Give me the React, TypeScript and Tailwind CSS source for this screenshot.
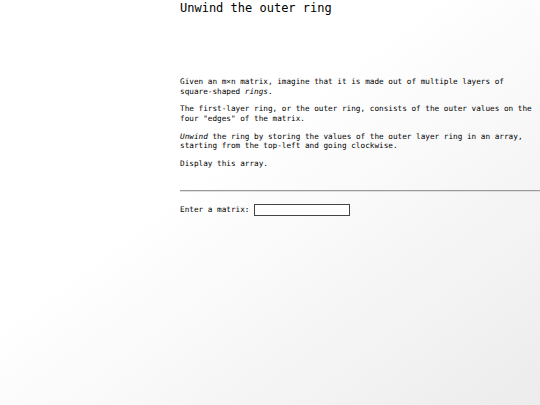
export default function App() {
  return (
    <div className="min-h-[405px] w-full bg-gradient-to-br from-white from-40% to-[#ececec] font-['DejaVu_Sans_Mono',monospace] text-black">
      <div className="ml-[180px] pt-px">
        <h1 className="text-[12px] leading-[14px] mt-0">Unwind the outer ring</h1>
        <div className="mt-[62px] text-[7.7px] leading-[9.8px]">
          <p>
            Given an m×n matrix, imagine that it is made out of multiple layers of square-shaped{" "}
            <em>rings</em>.
          </p>
          <p className="mt-[7.7px]">
            The first-layer ring, or the outer ring, consists of the outer values on the four "edges" of the matrix.
          </p>
          <p className="mt-[7.7px]">
            <em>Unwind</em> the ring by storing the values of the outer layer ring in an array, starting from the
            top-left and going clockwise.
          </p>
          <p className="mt-[7.7px]">Display this array.</p>
        </div>
        <hr className="mt-[21px] border-t border-t-[#9a9a9a] border-b border-b-[#e0e0e0]" />
        <div className="mt-[12px] flex items-center text-[7.7px]">
          <label>Enter a matrix:</label>
          <input type="text" className="ml-[5px] w-[96px] h-[12px] border border-[#444] bg-white" />
        </div>
      </div>
    </div>
  );
}
